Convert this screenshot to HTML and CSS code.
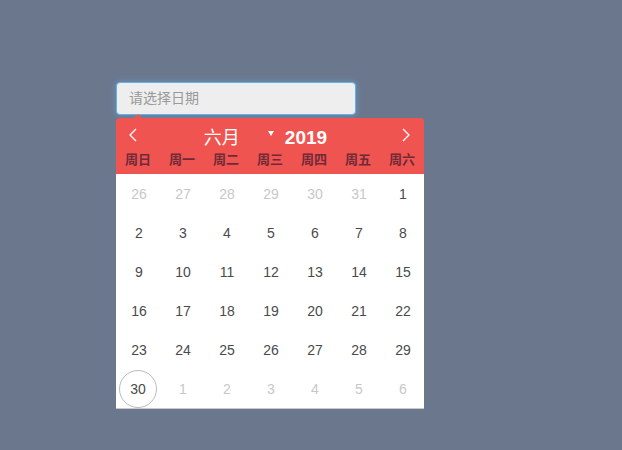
FILE: index.html
```html
<!DOCTYPE html>
<html lang="zh">
<head>
<meta charset="utf-8">
<title>日期选择</title>
<link rel="stylesheet" href="styles.css">
</head>
<body>
<div class="wrap">
  <div class="input">请选择日期</div>
  <div class="popup">
    <div class="header">
      <div class="title">
        <span class="nav prev"><svg width="8" height="14" viewBox="0 0 8 14"><polyline points="7,1 1,7 7,13" fill="none" stroke="#fff" stroke-width="1.3"/></svg></span>
        <div class="ym">
          <span class="month">六月</span>
          <span class="caret"></span>
          <span class="year">2019</span>
        </div>
        <span class="nav next"><svg width="8" height="14" viewBox="0 0 8 14"><polyline points="1,1 7,7 1,13" fill="none" stroke="#fff" stroke-width="1.3"/></svg></span>
      </div>
      <div class="weekdays">
        <span>周日</span><span>周一</span><span>周二</span><span>周三</span><span>周四</span><span>周五</span><span>周六</span>
      </div>
    </div>
    <div class="days">
      <span class="off">26</span><span class="off">27</span><span class="off">28</span><span class="off">29</span><span class="off">30</span><span class="off">31</span><span>1</span>
      <span>2</span><span>3</span><span>4</span><span>5</span><span>6</span><span>7</span><span>8</span>
      <span>9</span><span>10</span><span>11</span><span>12</span><span>13</span><span>14</span><span>15</span>
      <span>16</span><span>17</span><span>18</span><span>19</span><span>20</span><span>21</span><span>22</span>
      <span>23</span><span>24</span><span>25</span><span>26</span><span>27</span><span>28</span><span>29</span>
      <span class="today">30</span><span class="off">1</span><span class="off">2</span><span class="off">3</span><span class="off">4</span><span class="off">5</span><span class="off">6</span>
    </div>
  </div>
</div>
</body>
</html>
```

FILE: styles.css
```css
html, body {
  margin: 0;
  padding: 0;
  background: #6b778d;
  font-family: "Liberation Sans", "Noto Sans CJK SC", sans-serif;
}
.wrap {
  padding: 82px 0 0 116px;
}
.input {
  box-sizing: border-box;
  width: 240px;
  height: 33px;
  line-height: 31px;
  padding: 0 12px;
  border: 1px solid #66afe9;
  border-radius: 4px;
  background: #eeeeee;
  color: #999;
  font-size: 14px;
  box-shadow: 0 0 6px rgba(102, 175, 233, 0.6);
}
.popup {
  position: relative;
  width: 308px;
  margin-top: 3px;
}
.popup::before {
  content: "";
  position: absolute;
  left: 18px;
  top: -4px;
  border-left: 4px solid transparent;
  border-right: 4px solid transparent;
  border-bottom: 4px solid #f05451;
}
.header {
  background: #f05451;
  border-radius: 4px 4px 0 0;
  height: 56px;
}
.title {
  display: flex;
  align-items: center;
  height: 34px;
  padding: 0 14px 0 13px;
}
.nav {
  display: flex;
  width: 8px;
  height: 14px;
}
.ym {
  flex: 1;
  display: flex;
  align-items: baseline;
  justify-content: center;
  padding-right: 8px;
  padding-top: 1px;
  color: #fff;
  font-size: 18px;
}
.month {
  margin-right: 28px;
}
.caret {
  align-self: center;
  width: 0;
  height: 0;
  border-left: 3px solid transparent;
  border-right: 3px solid transparent;
  border-top: 5px solid #fff;
  margin-right: 11px;
  margin-top: -5px;
}
.year {
  font-weight: bold;
  font-size: 19px;
}
.weekdays {
  display: grid;
  grid-template-columns: repeat(7, 44px);
  height: 18px;
  line-height: 16px;
  font-size: 13px;
  font-weight: bold;
  color: #6e2a36;
  text-align: center;
}
.days {
  display: grid;
  grid-template-columns: repeat(7, 44px);
  grid-auto-rows: 39px;
  background: #fff;
  border-bottom: 1px solid #c8c8c8;
  font-size: 14px;
  color: #4a4a4a;
}
.days span {
  display: flex;
  align-items: center;
  justify-content: center;
  padding: 1px 0 0 2px;
}
.days .off {
  color: #c8c8c8;
}
.days .today {
  width: 38px;
  height: 38px;
  box-sizing: border-box;
  padding: 1px 0 0 0;
  margin: 0 0 0 3px;
  border: 1px solid #bbb;
  border-radius: 50%;
  align-self: center;
}
```
